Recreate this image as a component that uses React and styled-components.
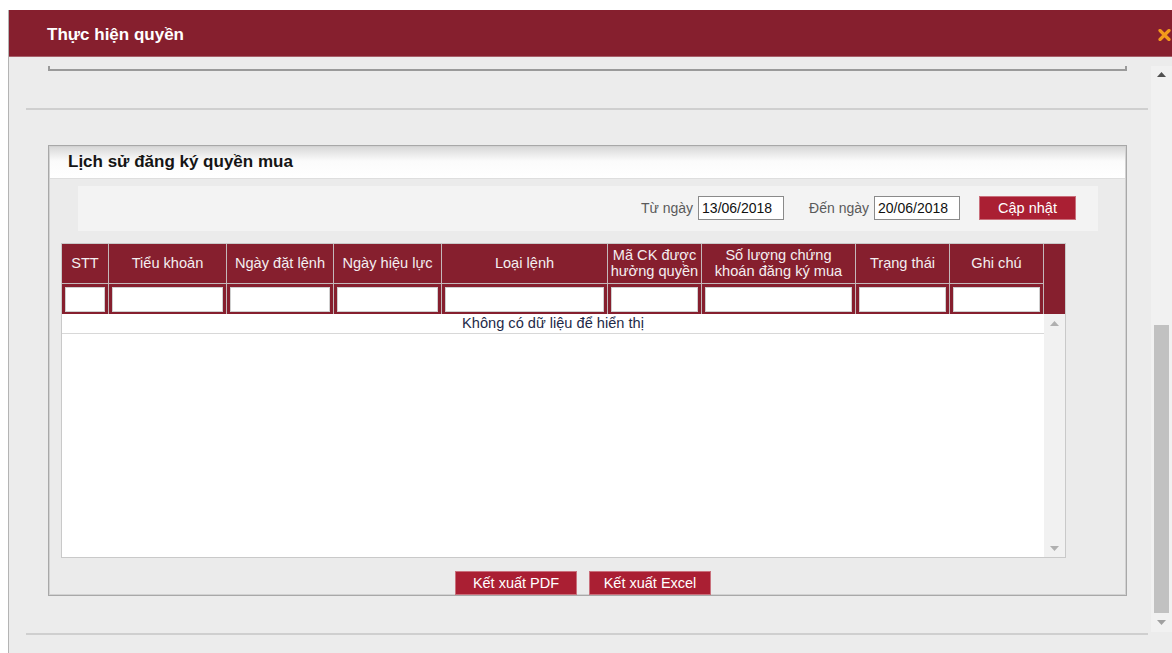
import React from "react";
import styled, { createGlobalStyle } from "styled-components";

const GlobalStyle = createGlobalStyle`
  html, body {
    margin: 0;
    padding: 0;
    background: #fff;
  }
  body {
    font-family: "Liberation Sans", Arial, sans-serif;
    overflow: hidden;
  }
`;

const Dialog = styled.div`
  margin: 10px 0 0 8px;
  height: 643px;
  border-left: 1px solid #b4b4b4;
  display: flex;
  flex-direction: column;
`;

const DialogHeader = styled.div`
  flex: none;
  box-sizing: border-box;
  height: 47px;
  background: #861f2e;
  border-bottom: 1px solid #a6606a;
  display: flex;
  align-items: center;
  justify-content: space-between;
  padding: 3px 1px 0 38px;
`;

const DialogTitle = styled.h1`
  margin: 0;
  color: #fff;
  font-size: 17px;
  font-weight: bold;
`;

const CloseButton = styled.span`
  display: flex;
  cursor: pointer;
`;

const DialogBody = styled.div`
  flex: 1;
  display: flex;
  background: #ececec;
  overflow: hidden;
`;

const Content = styled.div`
  width: 1142px;
  display: flex;
  flex-direction: column;
`;

/* bottom edge of the block scrolled above */
const BoxTail = styled.div`
  margin: 9px 24px 0 39px;
  height: 3px;
  border: 2px solid #9a9a9a;
  border-top: none;
`;

const Divider = styled.div`
  margin: ${(p) => p.$top}px 3px 0 17px;
  border-top: 2px solid #cfcfcf;
`;

const Panel = styled.section`
  margin: 35px 24px 0 39px;
  height: 449px;
  border: 1px solid #a8a8a8;
  box-shadow: inset 0 0 0 1px #d2d2d2;
  background: #ebebeb;
  display: flex;
  flex-direction: column;
`;

const PanelHeader = styled.div`
  height: 31px;
  margin: 1px 1px 0;
  border-bottom: 1px solid #dedede;
  background: linear-gradient(#d9d9d9 0%, #fbfbfb 45%, #ffffff 100%);
  display: flex;
  align-items: center;
  padding-left: 18px;
`;

const PanelTitle = styled.h2`
  margin: 0;
  font-size: 17px;
  font-weight: bold;
  color: #151515;
`;

const FilterBar = styled.div`
  margin: 7px 28px 0 29px;
  height: 45px;
  background: #f3f3f3;
  display: flex;
  align-items: center;
  justify-content: flex-end;
  padding-right: 22px;
  font-size: 14px;
`;

const FilterLabel = styled.label`
  color: #5a5a5a;
  margin: 0 5px 0 ${(p) => p.$gap}px;
`;

const DateInput = styled.input`
  box-sizing: border-box;
  width: 86px;
  height: 24px;
  padding: 0 3px;
  border: 1px solid #8a8a8a;
  background: #fff;
  font-family: inherit;
  font-size: 14px;
  color: #111;
`;

const RedButton = styled.button`
  box-sizing: border-box;
  width: ${(p) => p.$w}px;
  height: 24px;
  margin-left: ${(p) => p.$ml || 0}px;
  border: 1px solid #c9707c;
  background: #aa1f33;
  color: #fff;
  font-family: inherit;
  font-size: 14.5px;
  cursor: pointer;
`;

const Table = styled.div`
  margin: 12px 0 0 12px;
  width: 1003px;
  height: 314px;
  border: 1px solid #c9c9c9;
  display: flex;
  flex-direction: column;
  background: #fff;
`;

const cols = "47px 118px 107px 108px 166px 94px 154px 94px 94px 21px";

const HeadRow = styled.div`
  display: grid;
  grid-template-columns: ${cols};
  height: ${(p) => p.$h}px;
  background: #861f2e;
`;

const HeadCell = styled.div`
  border-right: 1px solid #c4b8ba;
  border-bottom: 1px solid #c4b8ba;
  display: flex;
  align-items: center;
  justify-content: center;
  text-align: center;
  color: #f4eef0;
  font-size: 14.6px;
  line-height: 16px;
  overflow: hidden;
  white-space: nowrap;
`;

const FilterCell = styled.div`
  border-right: 1px solid #c4b8ba;
  padding: 3px 3px 2px;
`;

const FilterInput = styled.input`
  box-sizing: border-box;
  width: 100%;
  height: 100%;
  border: 1px solid #cfcfcf;
  background: #fff;
`;

const ScrollGap = styled.div``;

const TableBody = styled.div`
  flex: 1;
  display: flex;
`;

const Rows = styled.div`
  width: 982px;
`;

const EmptyRow = styled.div`
  height: 19px;
  border-bottom: 1px solid #d8d8d8;
  text-align: center;
  font-size: 14.6px;
  line-height: 18px;
  color: #1e2a48;
`;

const ScrollTrack = styled.div`
  width: ${(p) => p.$w}px;
  background: #f1f1f1;
  display: flex;
  flex-direction: column;
  justify-content: ${(p) => (p.$spread ? "space-between" : "flex-start")};
`;

const ArrowBox = styled.div`
  height: 17px;
  display: flex;
  align-items: center;
  justify-content: center;
  margin-top: ${(p) => p.$mt || 0}px;
`;

const Thumb = styled.div`
  margin: 242px auto 0;
  width: 15px;
  height: 288px;
  background: #c1c1c1;
`;

const PageScroll = styled(ScrollTrack)`
  margin-top: 9px;
  height: 566px;
`;

const Actions = styled.div`
  margin-top: 13px;
  display: flex;
  justify-content: center;
  gap: 12px;
  padding-right: 9px;
`;

const Arrow = ({ up, color }) => (
  <svg width="9" height="5" viewBox="0 0 9 5">
    <path d={up ? "M0 5 L4.5 0 L9 5 Z" : "M0 0 L4.5 5 L9 0 Z"} fill={color} />
  </svg>
);

const headers = [
  ["STT"],
  ["Tiểu khoản"],
  ["Ngày đặt lệnh"],
  ["Ngày hiệu lực"],
  ["Loại lệnh"],
  ["Mã CK được", "hưởng quyền"],
  ["Số lượng chứng", "khoán đăng ký mua"],
  ["Trạng thái"],
  ["Ghi chú"],
];

export default function App() {
  return (
    <>
      <GlobalStyle />
      <Dialog>
        <DialogHeader>
          <DialogTitle>Thực hiện quyền</DialogTitle>
          <CloseButton>
            <svg width="13" height="12" viewBox="0 0 13 12">
              <path
                d="M2 1.5 L11 10.5 M11 1.5 L2 10.5"
                stroke="#f39a1b"
                strokeWidth="3.2"
                strokeLinecap="round"
              />
            </svg>
          </CloseButton>
        </DialogHeader>

        <DialogBody>
          <Content>
            <BoxTail />
            <Divider $top={37} />

            <Panel>
              <PanelHeader>
                <PanelTitle>Lịch sử đăng ký quyền mua</PanelTitle>
              </PanelHeader>

              <FilterBar>
                <FilterLabel $gap={0}>Từ ngày</FilterLabel>
                <DateInput defaultValue="13/06/2018" />
                <FilterLabel $gap={25}>Đến ngày</FilterLabel>
                <DateInput defaultValue="20/06/2018" />
                <RedButton $w={97} $ml={19}>Cập nhật</RedButton>
              </FilterBar>

              <Table>
                <HeadRow $h={40}>
                  {headers.map((lines) => (
                    <HeadCell key={lines[0]}>
                      <span>
                        {lines.map((l, i) => (
                          <React.Fragment key={l}>
                            {i > 0 && <br />}
                            {l}
                          </React.Fragment>
                        ))}
                      </span>
                    </HeadCell>
                  ))}
                  <ScrollGap />
                </HeadRow>
                <HeadRow $h={30}>
                  {headers.map((lines) => (
                    <FilterCell key={lines[0]}>
                      <FilterInput />
                    </FilterCell>
                  ))}
                  <ScrollGap />
                </HeadRow>
                <TableBody>
                  <Rows>
                    <EmptyRow>Không có dữ liệu để hiển thị</EmptyRow>
                  </Rows>
                  <ScrollTrack $w={21} $spread>
                    <ArrowBox $mt={1}>
                      <Arrow up color="#b0b0b0" />
                    </ArrowBox>
                    <ArrowBox>
                      <Arrow color="#b0b0b0" />
                    </ArrowBox>
                  </ScrollTrack>
                </TableBody>
              </Table>

              <Actions>
                <RedButton $w={122}>Kết xuất PDF</RedButton>
                <RedButton $w={122}>Kết xuất Excel</RedButton>
              </Actions>
            </Panel>

            <Divider $top={37} />
          </Content>

          <PageScroll $w={21}>
            <ArrowBox>
              <Arrow up color="#505050" />
            </ArrowBox>
            <Thumb />
            <ArrowBox $mt={1}>
              <Arrow color="#a0a0a0" />
            </ArrowBox>
          </PageScroll>
        </DialogBody>
      </Dialog>
    </>
  );
}
